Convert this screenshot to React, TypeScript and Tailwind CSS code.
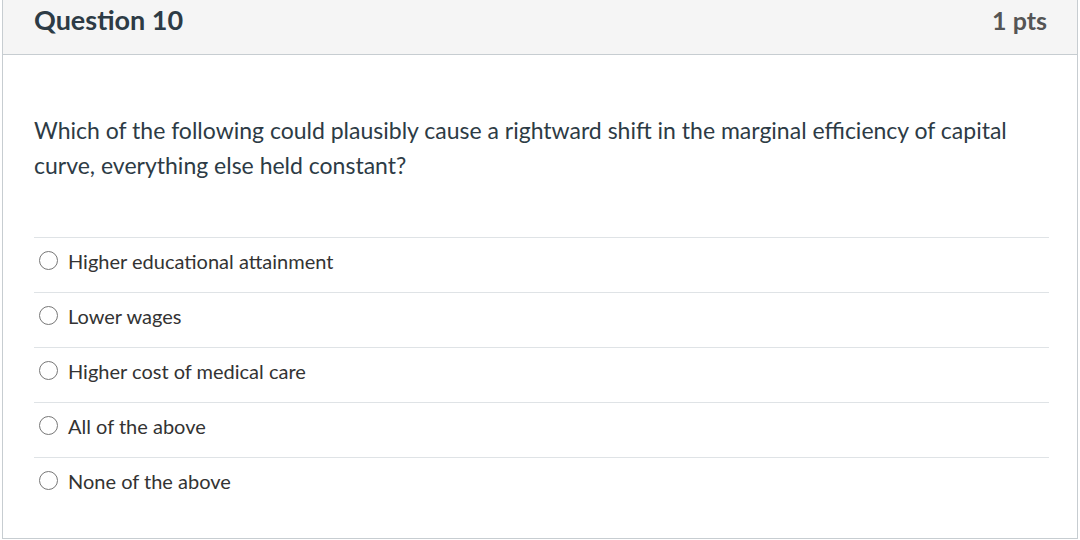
const options = [
  'Higher educational attainment',
  'Lower wages',
  'Higher cost of medical care',
  'All of the above',
  'None of the above',
]

const App = () => {
  return (
    <div className="h-[540px] w-[1080px] bg-white font-['Lato',sans-serif] text-[#2d3b45]">
      <div className="ml-[2px] flex h-[539px] w-[1076px] flex-col border border-t-0 border-[#c7cdd1]">
        <div className="flex h-[55px] items-start justify-between border-b border-[#c7cdd1] bg-[#f5f5f5] pl-[31px] pr-[30px] pt-[2px]">
          <span className="text-[27px] font-bold leading-[36px]">Question 10</span>
          <span className="text-[25px] font-bold leading-[36px] text-[#555]">1 pts</span>
        </div>
        <div className="px-[31px] pt-[58px]">
          <p className="text-[23px] leading-[35px]">
            Which of the following could plausibly cause a rightward shift in the marginal efficiency of capital
            <br />
            curve, everything else held constant?
          </p>
          <div className="mt-[54px] mr-[-3px]">
            {options.map((o) => (
              <div key={o} className="flex h-[55px] items-center border-t border-[#dfe3e6] pb-[9px] pl-[5px]">
                <span className="h-[19px] w-[19px] rounded-full border border-[#777] bg-white" />
                <span className="ml-[10px] text-[20px] text-[#333]">{o}</span>
              </div>
            ))}
          </div>
        </div>
      </div>
    </div>
  )
}

export default App
